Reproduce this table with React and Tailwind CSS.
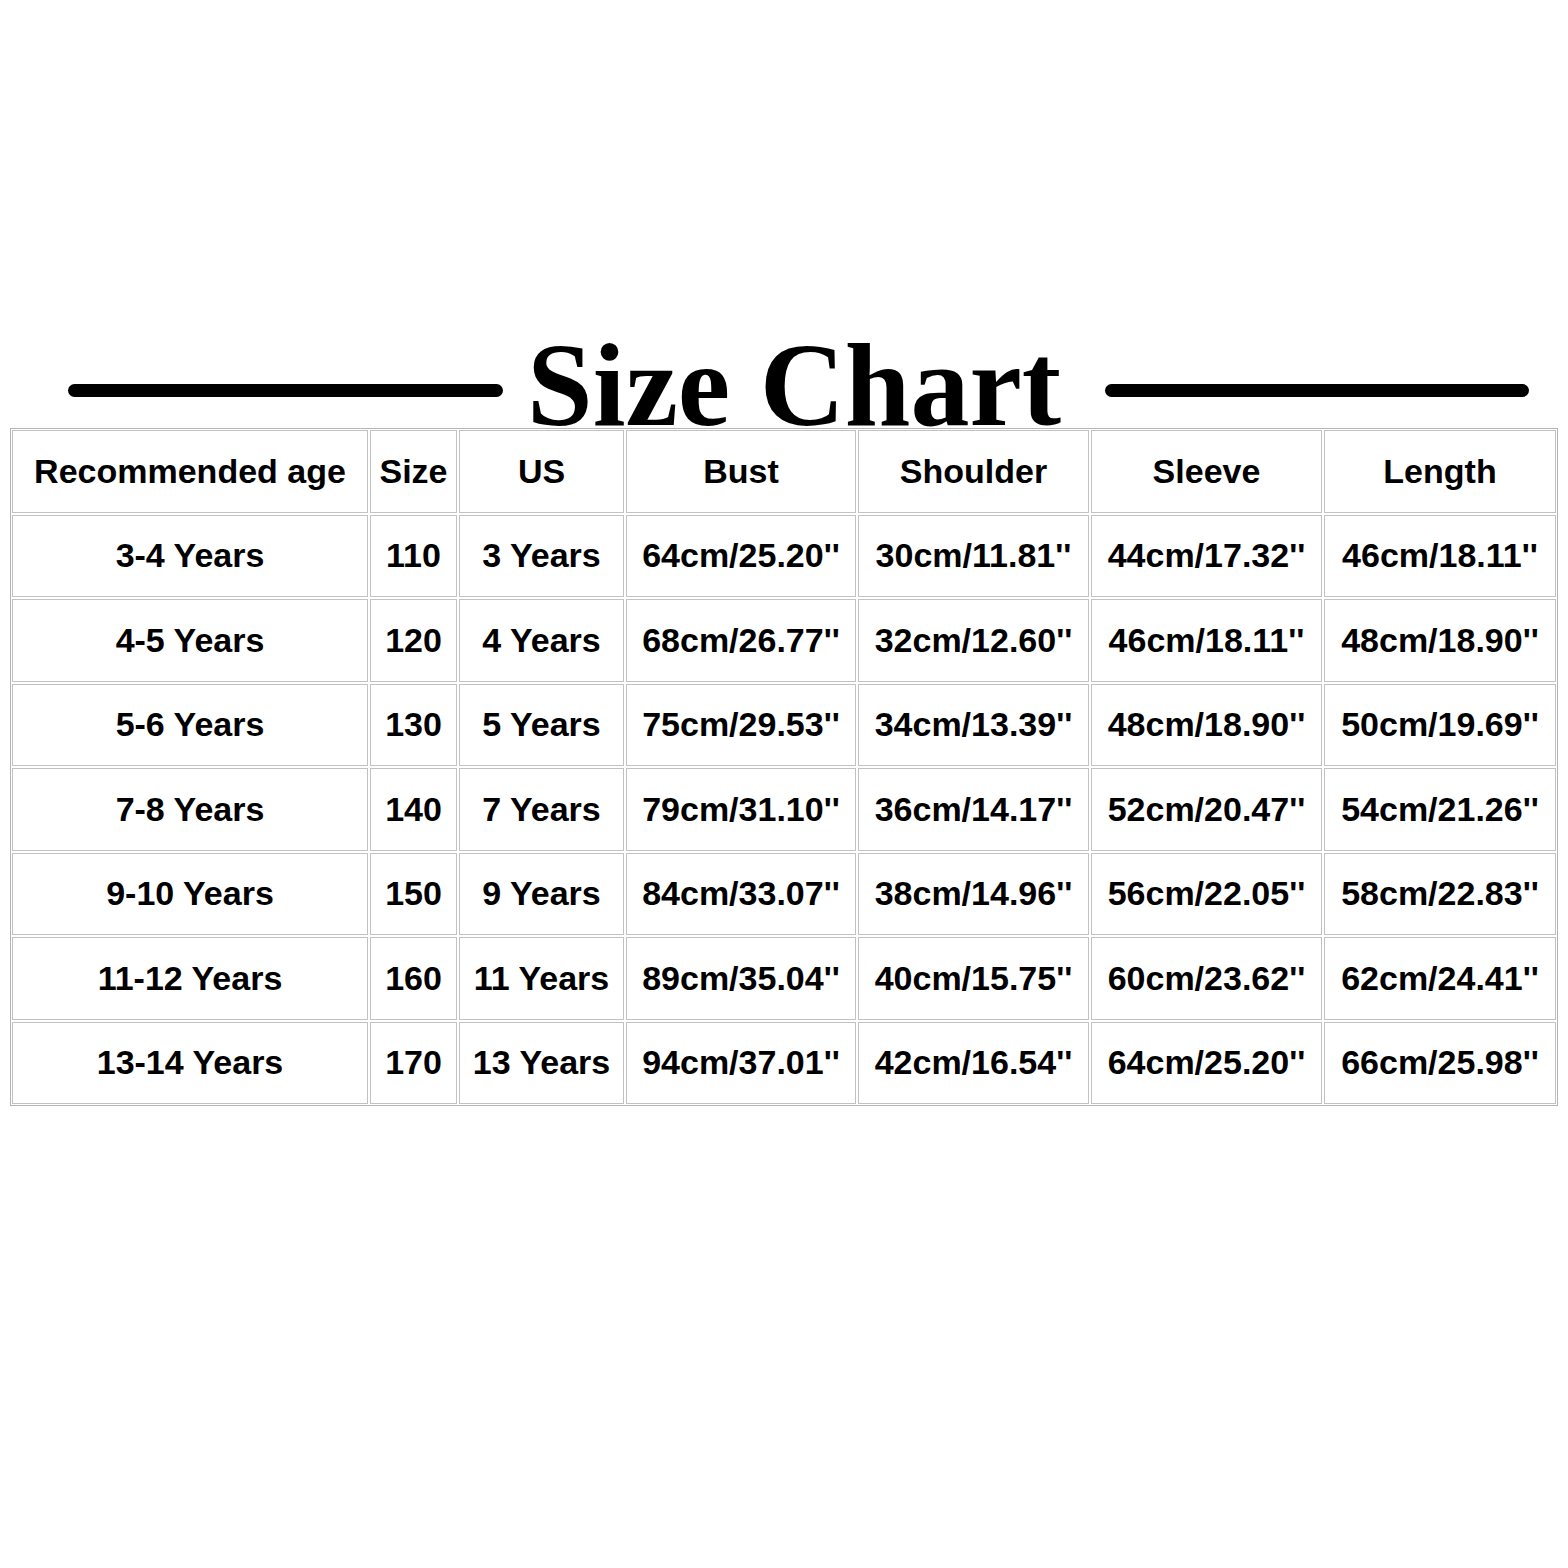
import React from "react";

const HEAD = ["Recommended age", "Size", "US", "Bust", "Shoulder", "Sleeve", "Length"];

const ROWS = [
  ["3-4 Years", "110", "3 Years", "64cm/25.20''", "30cm/11.81''", "44cm/17.32''", "46cm/18.11''"],
  ["4-5 Years", "120", "4 Years", "68cm/26.77''", "32cm/12.60''", "46cm/18.11''", "48cm/18.90''"],
  ["5-6 Years", "130", "5 Years", "75cm/29.53''", "34cm/13.39''", "48cm/18.90''", "50cm/19.69''"],
  ["7-8 Years", "140", "7 Years", "79cm/31.10''", "36cm/14.17''", "52cm/20.47''", "54cm/21.26''"],
  ["9-10 Years", "150", "9 Years", "84cm/33.07''", "38cm/14.96''", "56cm/22.05''", "58cm/22.83''"],
  ["11-12 Years", "160", "11 Years", "89cm/35.04''", "40cm/15.75''", "60cm/23.62''", "62cm/24.41''"],
  ["13-14 Years", "170", "13 Years", "94cm/37.01''", "42cm/16.54''", "64cm/25.20''", "66cm/25.98''"],
];

function Cell({ children }) {
  return (
    <div className="flex items-center justify-center border border-[#c2c2c2] whitespace-nowrap">
      {children}
    </div>
  );
}

export default function App() {
  return (
    <div className="w-[1568px] h-[1568px] bg-white pt-[327px]">
      {/* title with the two rules; bottom of the letters is cut by the table */}
      <div className="flex items-start h-[101px] overflow-hidden">
        <div className="ml-[68px] mt-[57px] w-[435px] h-[13px] rounded-full bg-black" />
        <div
          className="ml-[24px] text-[118px] leading-none font-bold text-black"
          style={{ fontFamily: '"Liberation Serif", "Times New Roman", serif' }}
        >
          Size Chart
        </div>
        <div className="ml-[44px] mt-[57px] w-[424px] h-[13px] rounded-full bg-black" />
      </div>

      <div
        className="ml-[10px] w-[1548px] border border-[#b5b5b5] p-px grid grid-cols-[356px_87px_165px_230px_231px_231px_232px] auto-rows-[82.5px] gap-[2px] text-[34px] font-bold text-black"
        style={{ fontFamily: '"Liberation Sans", Arial, sans-serif' }}
      >
        {HEAD.map((h) => (
          <Cell key={h}>{h}</Cell>
        ))}
        {ROWS.map((row) =>
          row.map((v, i) => <Cell key={row[0] + i}>{v}</Cell>)
        )}
      </div>
    </div>
  );
}
